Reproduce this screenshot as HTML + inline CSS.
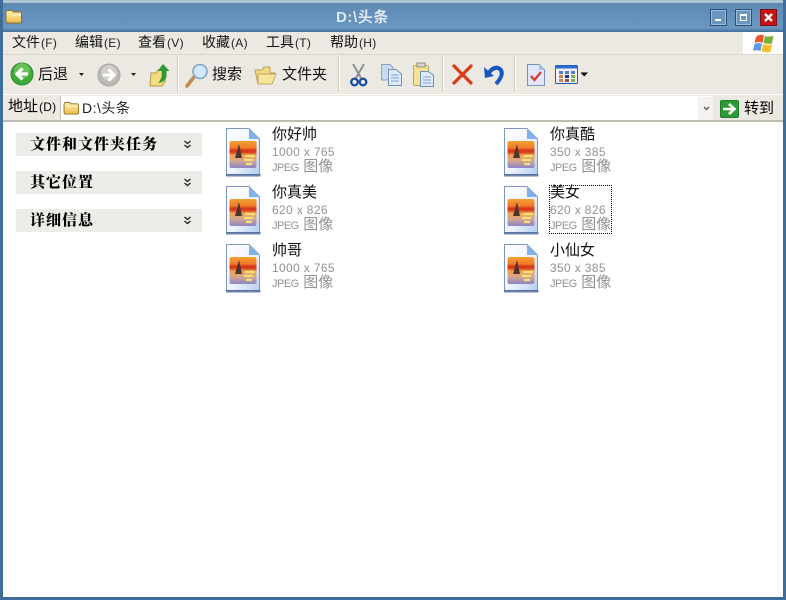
<!DOCTYPE html>
<html>
<head>
<meta charset="utf-8">
<style>
html,body{margin:0;padding:0;background:#fff}
#w{position:relative;width:786px;height:600px;overflow:hidden;background:#fff;font-family:"Liberation Sans","Noto Sans CJK SC",sans-serif;color:#000}
#w div,#w svg{position:absolute}
.t{white-space:nowrap;line-height:1}
.m{font-size:14px;top:35px;color:#111}
.m small{font-size:12px;margin-left:1px;letter-spacing:.3px;color:#222}
.tb{font-size:15px;top:67px;color:#111}
.sep{width:1px;height:36px;top:56px;background:#cfccc2;border-right:1px solid #fbfaf7}
.side{left:16px;width:186px;height:23px;background:#eeece8}
.side b{position:absolute;left:14px;top:3px;font-size:15px;letter-spacing:1px;line-height:1.100;font-family:"Noto Serif CJK SC","Liberation Serif",serif;font-weight:900;white-space:nowrap}
.n{font-size:15px;line-height:1;white-space:nowrap;color:#111}
.g{font-size:12px;line-height:1;color:#929292;white-space:nowrap;letter-spacing:.35px}
.j{font-size:11px;line-height:15px;color:#929292;white-space:nowrap;letter-spacing:-.5px}
.j em{font-style:normal;font-size:15px;letter-spacing:0;margin-left:2px}
</style>
</head>
<body>
<div id="w">
<svg width="0" height="0" style="left:0;top:0">
<defs>
<filter id="bl" x="-10%" y="-10%" width="120%" height="120%"><feGaussianBlur stdDeviation=".35"/></filter>
<filter id="bs" x="-10%" y="-10%" width="120%" height="120%"><feGaussianBlur stdDeviation=".3"/></filter>
<linearGradient id="sky" x1="0" y1="0" x2="0" y2="1"><stop offset="0" stop-color="#f5a035"/><stop offset=".26" stop-color="#f07a28"/><stop offset=".34" stop-color="#d4361a"/><stop offset=".42" stop-color="#d8401c"/><stop offset=".52" stop-color="#f2a24a"/><stop offset=".72" stop-color="#d8a88c"/><stop offset="1" stop-color="#8c84c8"/></linearGradient>
<linearGradient id="pg" x1="0" y1="0" x2="1" y2="1"><stop offset="0" stop-color="#ffffff"/><stop offset=".55" stop-color="#eef3fd"/><stop offset="1" stop-color="#b4cdf2"/></linearGradient>
<linearGradient id="fg" x1="0" y1="0" x2="0" y2="1"><stop offset="0" stop-color="#fff0b0"/><stop offset="1" stop-color="#eebd4c"/></linearGradient>
<symbol id="f" viewBox="0 0 38 50">
<g filter="url(#bs)">
<path d="M2.500 1.500H25L35.500 12V47.500H2.500Z" fill="url(#pg)" stroke="#7c96c0" stroke-width="1"/>
<path d="M2 47H36.500V49.500H2Z" fill="#4a6896" opacity=".8"/>
<path d="M25 1.500V12H35.500Z" fill="#7fb2ea"/>
</g>
<g filter="url(#bl)">
<rect x="5.500" y="14" width="27" height="27" rx="2" fill="url(#sky)"/>
<path d="M11 31L15 17L18 31Z" fill="#4c342e"/>
<path d="M21 29H31M20 33H29M22 37H28" stroke="#f8e078" stroke-width="2.200"/>
</g>
</symbol>
<symbol id="fold" viewBox="0 0 18 15">
<path d="M1 4Q1 1.500 3 1.500H7L8.500 3H15Q16.500 3 16.500 5V12Q16.500 14 15 14H3Q1 14 1 12Z" fill="url(#fg)" stroke="#8f7028"/>
<path d="M2 6H16" stroke="#fff4c4"/>
</symbol>
</defs>
</svg>

<!-- frame -->
<div style="left:0;top:0;width:786px;height:4px;background:linear-gradient(#a9c1cf,#b8cdd8 60%,#3c6a97)"></div>
<div style="left:0;top:4px;width:786px;height:28px;background:linear-gradient(#5d8bb6,#6492bb 50%,#6a97bf 85%,#43709d)"></div>
<div style="left:0;top:0;width:3px;height:600px;background:#3f6d9b"></div>
<div style="right:0;top:0;width:3px;height:600px;background:#3f6d9b"></div>
<div style="left:0;top:597px;width:786px;height:3px;background:#3f6d9b"></div>

<!-- title -->
<svg style="left:5px;top:9px" width="18" height="15"><use href="#fold"/></svg>
<div class="t" style="left:336px;top:10px;font-size:15px;letter-spacing:.6px;color:#dfe8f0;font-weight:bold">D:\头条</div>

<!-- window buttons -->
<div style="left:710px;top:9px;width:15px;height:15px;border:1px solid #2c4f78;background:#6b96bf;box-shadow:inset 0 0 0 1px #9cbcd8"></div>
<div style="left:715px;top:19px;width:6px;height:2px;background:#fff"></div>
<div style="left:735px;top:9px;width:15px;height:15px;border:1px solid #2c4f78;background:#6b96bf;box-shadow:inset 0 0 0 1px #9cbcd8"></div>
<div style="left:740px;top:14px;width:5px;height:4px;border:1px solid #fff;border-top-width:2px"></div>
<div style="left:760px;top:9px;width:15px;height:15px;border:1px solid #7a1010;background:#c81418"></div>
<svg style="left:761px;top:10px" width="15" height="15"><path d="M4 4L11 11M11 4L4 11" stroke="#fff" stroke-width="2.400"/></svg>

<!-- menu -->
<div style="left:3px;top:32px;width:780px;height:23px;background:#ece9e2;border-bottom:1px solid #d9d6cd;box-sizing:border-box"></div>
<div class="t m" style="left:12px">文件<small>(F)</small></div>
<div class="t m" style="left:75px">编辑<small>(E)</small></div>
<div class="t m" style="left:138px">查看<small>(V)</small></div>
<div class="t m" style="left:202px">收藏<small>(A)</small></div>
<div class="t m" style="left:266px">工具<small>(T)</small></div>
<div class="t m" style="left:330px">帮助<small>(H)</small></div>
<div style="left:743px;top:32px;width:40px;height:22px;background:#fff"></div>
<svg style="left:752px;top:32px" width="24" height="22">
<g filter="url(#bs)">
<path d="M4 5Q7.500 1.500 12 3.500L10.500 11Q6.500 9 2.500 11Z" fill="#e8582a"/>
<path d="M13 4Q17 5.500 21.500 3.500L20 11.500Q15.500 12.500 11.500 11Z" fill="#74b038"/>
<path d="M2.500 12Q6.500 10 10 12L8.500 19Q5 17.500 1 19Z" fill="#5c9ce6"/>
<path d="M11 12Q15.500 13.500 20 12.500L18.500 20Q13.500 21 9.500 19Z" fill="#f4bf2c"/>
</g>
</svg>

<!-- toolbar -->
<div style="left:3px;top:55px;width:780px;height:40px;background:#ece9e2;border-bottom:1px solid #fff;box-sizing:border-box"></div>
<svg style="left:10px;top:62px" width="24" height="24">
<circle cx="12" cy="12" r="11" fill="#3ca83a" stroke="#2c8a30"/><circle cx="12" cy="9" r="8" fill="#7ed06a" opacity=".6"/>
<path d="M18 12H8M12.500 6.500L7 12L12.500 17.500" stroke="#fff" stroke-width="3.200" fill="none"/>
</svg>
<div class="t tb" style="left:38px">后退</div>
<svg style="left:78px;top:72px" width="7" height="5"><path d="M1 1H6L3.500 4Z" fill="#222"/></svg>
<svg style="left:97px;top:63px" width="24" height="24">
<circle cx="12" cy="12" r="11" fill="#bbb9b4" stroke="#a8a6a0"/><circle cx="12" cy="10" r="8" fill="#d8d7d3" opacity=".7"/>
<path d="M6 12H16M11.500 6.500L17 12L11.500 17.500" stroke="#fff" stroke-width="3" fill="none"/>
</svg>
<svg style="left:130px;top:72px" width="7" height="5"><path d="M1 1H6L3.500 4Z" fill="#222"/></svg>
<svg style="left:148px;top:62px" width="22" height="25">
<path d="M3 11H8L10 8H17V20L14 24H2Z" fill="#f6dc80" stroke="#b09850"/>
<path d="M15 2L21.500 9H18.500V14Q18 20 10 21Q15 16 13.500 9H9.500Z" fill="#2f9a34"/>
</svg>
<div class="sep" style="left:177px"></div>
<svg style="left:184px;top:62px" width="26" height="26">
<path d="M3 24L10 15" stroke="#c08a50" stroke-width="3.500" stroke-linecap="round"/>
<circle cx="16" cy="9.500" r="7" fill="#d4e8fa" stroke="#7ea4cc" stroke-width="1.600"/>
</svg>
<div class="t tb" style="left:212px">搜索</div>
<svg style="left:254px;top:65px" width="23" height="21">
<path d="M1 5H8L10 2H16V8H21L18 19H4Z" fill="#f2d680" stroke="#b8a058"/>
<path d="M4 9H22L18 19H4Z" fill="#f8e49a" stroke="#c4a860"/>
</svg>
<div class="t tb" style="left:282px">文件夹</div>
<div class="sep" style="left:338px"></div>
<svg style="left:349px;top:63px" width="20" height="24">
<path d="M4 1L12 15M15 1L7 15" stroke="#8c8f98" stroke-width="2"/>
<circle cx="5.500" cy="19" r="3.300" fill="none" stroke="#1a4fa0" stroke-width="2.300"/>
<circle cx="14" cy="19" r="3.300" fill="none" stroke="#1a4fa0" stroke-width="2.300"/>
</svg>
<svg style="left:380px;top:63px" width="23" height="24">
<path d="M1.500 1.500H10L13 4.500V17H1.500Z" fill="#c8daf2" stroke="#8aa4c8"/>
<path d="M8.500 6.500H16L21.500 11V22.500H8.500Z" fill="#dfe9f8" stroke="#7090b8"/>
<path d="M11 12H19M11 15H19M11 18H19" stroke="#7ea4d8"/>
</svg>
<svg style="left:412px;top:62px" width="23" height="26">
<rect x="1.500" y="3.500" width="15" height="20" rx="1.500" fill="#f6e196" stroke="#b8a868"/>
<rect x="5" y="1" width="8" height="4" fill="#d9d5c8" stroke="#8e8c80"/>
<path d="M8.500 9.500H16L21.500 13V24.500H8.500Z" fill="#dfe9f8" stroke="#7090b8"/>
<path d="M11 15H19M11 18H19M11 21H19" stroke="#7ea4d8"/>
</svg>
<div class="sep" style="left:442px"></div>
<svg style="left:451px;top:63px" width="23" height="23"><path d="M2 2L21 21M21 2L2 21" stroke="#dc3a14" stroke-width="3.200"/></svg>
<svg style="left:483px;top:63px" width="23" height="23">
<path d="M5 11Q11 2 17 6Q22 11 13 21" fill="none" stroke="#1558c0" stroke-width="4"/>
<path d="M1 4L2 15L11 13Z" fill="#1558c0"/>
</svg>
<div class="sep" style="left:514px"></div>
<svg style="left:526px;top:63px" width="20" height="24">
<path d="M1.500 1.500H13L18.500 7V22.500H1.500Z" fill="#dfe7f8" stroke="#7a90b8"/>
<path d="M13 1.500V7H18.500Z" fill="#a8c4ee"/>
<path d="M5 13L8.500 17L15 9" fill="none" stroke="#d83c30" stroke-width="2.400"/>
</svg>
<svg style="left:555px;top:65px" width="24" height="20">
<rect x=".5" y=".5" width="22" height="18" rx="1" fill="#eef1f8" stroke="#1f5cb0"/>
<rect x=".5" y=".5" width="22" height="3" fill="#2a6cc8"/>
<path d="M4 6h4v3H4zM10 6h4v3h-4zM16 6h4v3h-4z" fill="#5a7cc8"/>
<path d="M4 10h4v3H4zM4 14h4v3H4z" fill="#d88050"/><path d="M10 10h4v3h-4z" fill="#1c3c80"/><path d="M10 14h4v3h-4z" fill="#a05040"/><path d="M16 10h4v3h-4zM16 14h4v3h-4z" fill="#7cb050"/>
</svg>
<svg style="left:580px;top:72px" width="9" height="5"><path d="M.5 .5H8L4.200 4.500Z" fill="#000"/></svg>

<!-- address -->
<div style="left:3px;top:95px;width:780px;height:27px;background:#ece9e2;border-bottom:2px solid #bdbbb2;box-sizing:border-box"></div>
<div class="t" style="left:8px;top:99px;font-size:15px">地址<span style="font-size:12px;margin-left:1px;letter-spacing:.2px">(D)</span></div>
<div style="left:60px;top:96px;width:653px;height:24px;background:#fff;border-left:1px solid #c4c1b8;box-sizing:border-box"></div>
<div style="left:698px;top:97px;width:15px;height:23px;background:#f4f2ee"></div>
<svg style="left:703px;top:106px" width="7" height="5"><path d="M1 1L3.500 3.500L6 1" fill="none" stroke="#555" stroke-width="1.300"/></svg>
<svg style="left:63px;top:101px" width="17" height="14"><use href="#fold"/></svg>
<div class="t" style="left:82px;top:101px;font-size:14px;color:#222;letter-spacing:.5px">D:\头条</div>
<svg style="left:720px;top:100px" width="20" height="18">
<rect x=".5" y=".5" width="18" height="17" rx="1.500" fill="#2e9a36" stroke="#1f7c2a"/>
<path d="M3 9H13M9 4L14.500 9L9 14" fill="none" stroke="#fff" stroke-width="2.600"/>
</svg>
<div class="t" style="left:744px;top:101px;font-size:15px">转到</div>

<!-- side panel -->
<div class="side" style="top:133px"><b>文件和文件夹任务</b></div>
<div class="side" style="top:171px"><b>其它位置</b></div>
<div class="side" style="top:209px"><b>详细信息</b></div>
<svg style="left:183px;top:140px" width="9" height="9"><path d="M1.500 1L4.500 3.500L7.500 1M1.500 5L4.500 7.500L7.500 5" fill="none" stroke="#222" stroke-width="1.300"/></svg>
<svg style="left:183px;top:178px" width="9" height="9"><path d="M1.500 1L4.500 3.500L7.500 1M1.500 5L4.500 7.500L7.500 5" fill="none" stroke="#222" stroke-width="1.300"/></svg>
<svg style="left:183px;top:216px" width="9" height="9"><path d="M1.500 1L4.500 3.500L7.500 1M1.500 5L4.500 7.500L7.500 5" fill="none" stroke="#222" stroke-width="1.300"/></svg>

<!-- files column 1 -->
<svg style="left:224px;top:127px" width="38" height="50"><use href="#f"/></svg>
<div class="n" style="left:272px;top:127px">你好帅</div>
<div class="g" style="left:272px;top:146px">1000 x 765</div>
<div class="j" style="left:272px;top:159px">JPEG <em>图像</em></div>

<svg style="left:224px;top:185px" width="38" height="50"><use href="#f"/></svg>
<div class="n" style="left:272px;top:185px">你真美</div>
<div class="g" style="left:272px;top:204px">620 x 826</div>
<div class="j" style="left:272px;top:217px">JPEG <em>图像</em></div>

<svg style="left:224px;top:243px" width="38" height="50"><use href="#f"/></svg>
<div class="n" style="left:272px;top:243px">帅哥</div>
<div class="g" style="left:272px;top:262px">1000 x 765</div>
<div class="j" style="left:272px;top:275px">JPEG <em>图像</em></div>

<!-- files column 2 -->
<svg style="left:502px;top:127px" width="38" height="50"><use href="#f"/></svg>
<div class="n" style="left:550px;top:127px">你真酷</div>
<div class="g" style="left:550px;top:146px">350 x 385</div>
<div class="j" style="left:550px;top:159px">JPEG <em>图像</em></div>

<svg style="left:502px;top:185px" width="38" height="50"><use href="#f"/></svg>
<div class="n" style="left:550px;top:185px">美女</div>
<div class="g" style="left:550px;top:204px">620 x 826</div>
<div class="j" style="left:550px;top:217px">JPEG <em>图像</em></div>
<div style="left:549px;top:185px;width:61px;height:47px;border:1px dotted #000"></div>

<svg style="left:502px;top:243px" width="38" height="50"><use href="#f"/></svg>
<div class="n" style="left:550px;top:243px">小仙女</div>
<div class="g" style="left:550px;top:262px">350 x 385</div>
<div class="j" style="left:550px;top:275px">JPEG <em>图像</em></div>
</div>
</body>
</html>
